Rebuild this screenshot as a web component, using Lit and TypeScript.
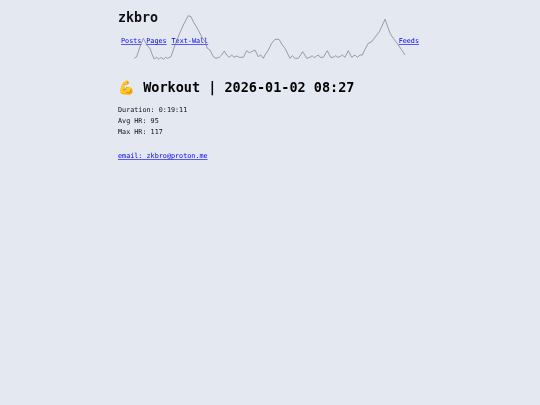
import { LitElement, html, css, svg } from "lit";
import { customElement } from "lit/decorators.js";

const A: [number, number][] = [[73,175],[80,170],[90,140],[100,115],[105,125],[112,138],[120,145],[127,165],[133,177],[140,172],[147,178],[153,172],[160,178],[167,172],[173,175],[183,170],[195,135],[207,105],[220,75],[235,47],[243,50],[250,65],[262,85],[275,110],[285,125],[292,145],[300,150],[310,170],[318,175],[328,172],[335,165],[343,153],[350,165],[358,172],[365,165],[372,172],[380,168],[388,172],[400,172],[410,152],[418,158],[425,155],[435,150],[445,170],[452,165],[460,175]];
const B: [number, number][] = [[0,165],[10,150],[20,130],[30,118],[42,118],[52,135],[60,145],[75,175],[82,167],[90,175],[100,175],[113,155],[125,175],[135,172],[142,167],[148,173],[155,168],[160,165],[165,172],[175,172],[187,152],[197,172],[205,172],[212,167],[218,172],[225,170],[232,165],[240,172],[250,152],[260,172],[270,165],[277,172],[285,165],[292,165],[300,148],[310,130],[320,125],[330,112],[343,95],[350,80],[360,58],[368,80],[375,100],[385,115],[400,135],[410,150],[420,165]];
const pts = [
  ...A.map(([x, y]) => `${(x / 3 - 8).toFixed(1)},${(y / 3).toFixed(1)}`),
  ...B.map(([x, y]) => `${(x / 3 + 147).toFixed(1)},${(y / 3).toFixed(1)}`),
].join(" ");

@customElement("app-root")
export class AppRoot extends LitElement {
  static styles = css`
    :host {
      display: block;
      min-height: 405px;
      background: #e4e8f1;
      font-family: "DejaVu Sans Mono", monospace;
      font-size: 6.77px;
      color: #111;
    }
    .page {
      width: 304px;
      margin: 0 auto;
      position: relative;
      filter: blur(0.35px);
    }
    .chart {
      position: absolute;
      left: 0;
      top: 0;
      width: 304px;
      height: 70px;
      pointer-events: none;
    }
    .chart polyline {
      fill: none;
      stroke: #7a7a7a;
      stroke-width: 0.7;
    }
    header {
      height: 70px;
      display: flex;
      flex-direction: column;
    }
    .brand {
      font-size: 13.3px;
      font-weight: 700;
      line-height: 16px;
      padding-top: 10px;
    }
    nav {
      display: flex;
      justify-content: space-between;
      padding: 10px 3px 0;
      line-height: 10px;
    }
    .left {
      display: flex;
      gap: 4.9px;
    }
    a {
      color: #0000ee;
      text-decoration: underline;
      text-decoration-color: #5a5af0;
    }
    h1 {
      margin: 0;
      font-size: 13.5px;
      font-weight: 700;
      line-height: 18px;
      padding-top: 8px;
      color: #000;
    }
    .stats {
      margin-top: 9px;
      line-height: 11px;
    }
    .contact {
      margin-top: 13px;
      line-height: 11px;
    }
  `;

  render() {
    return html`
      <div class="page">
        <svg class="chart" viewBox="0 0 304 70">${svg`<polyline points=${pts}></polyline>`}</svg>
        <header>
          <div class="brand">zkbro</div>
          <nav>
            <div class="left">
              <a href="#">Posts</a>
              <a href="#">Pages</a>
              <a href="#">Text-Wall</a>
            </div>
            <a href="#">Feeds</a>
          </nav>
        </header>
        <h1>💪 Workout | 2026-01-02 08:27</h1>
        <div class="stats">
          <div>Duration: 0:19:11</div>
          <div>Avg HR: 95</div>
          <div>Max HR: 117</div>
        </div>
        <div class="contact"><a href="#">email: zkbro@proton.me</a></div>
      </div>
    `;
  }
}
